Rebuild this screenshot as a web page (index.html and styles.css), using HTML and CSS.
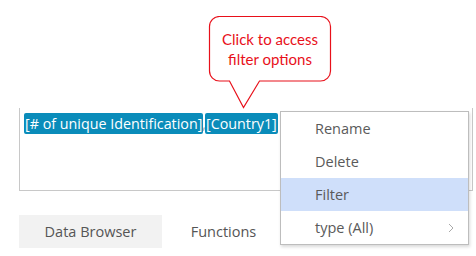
FILE: index.html
```html
<!DOCTYPE html>
<html lang="en">
<head>
  <meta charset="UTF-8">
  <title>Filter options</title>
  <link rel="stylesheet" href="styles.css">
</head>
<body>

  <div class="page">
    <div class="editor">
      <span class="token">[# of unique Identification]</span><span class="sep">,</span><span class="token">[Country1]</span>
    </div>

    <div class="tabs">
      <div class="tab active">Data Browser</div>
      <div class="tab">Functions</div>
    </div>

    <!-- callout pointing at the token -->
    <div class="callout">
      <svg class="callout-shape" width="126" height="96" viewBox="0 0 126 96">
        <path d="M11.5 0.5 H112.5 A10 10 0 0 1 122.5 10.5 V55 A10 10 0 0 1 112.5 65 H51.5 L35.5 91.5 L21.5 65 H11.5 A10 10 0 0 1 1.5 55 V10.5 A10 10 0 0 1 11.5 0.5 Z" fill="#fff" stroke="#e8101a" stroke-width="1.2"/>
      </svg>
      <div class="callout-text">Click to access<br>filter options</div>
    </div>

    <!-- context menu -->
    <div class="menu">
      <div class="menu-item">Rename</div>
      <div class="menu-item">Delete</div>
      <div class="menu-item selected">Filter</div>
      <div class="menu-item">type (All)
        <svg class="chevron" width="6" height="10" viewBox="0 0 6 10">
          <path d="M1 1 L5 5 L1 9" fill="none" stroke="#aaa" stroke-width="1"/>
        </svg>
      </div>
    </div>
  </div>

</body>
</html>
```

FILE: styles.css
```css
body {
  margin: 0;
  font-family: "Open Sans", sans-serif;
  background-color: #fff;
}
.page {
  position: relative;
  width: 476px;
  height: 256px;
  padding-top: 108px;
  box-sizing: border-box;
}
.editor {
  margin-left: 19px;
  width: 454px;
  height: 83px;
  box-sizing: border-box;
  border: 1px solid #c8c8c8;
  border-top: none;
  padding: 5px 0 0 4px;
  display: flex;
  align-items: flex-start;
}
.token {
  background-color: #0a8cba;
  color: #fff;
  font-size: 14.3px;
  line-height: 21px;
  padding: 0 1px;
  border-radius: 2px;
}
.sep {
  color: #aaa;
  font-size: 14px;
  line-height: 21px;
  margin: 0 -1px;
}
.tabs {
  display: flex;
  margin: 24px 0 0 19px;
}
.tab {
  height: 33px;
  line-height: 33px;
  font-size: 14.5px;
  color: #555;
  text-align: center;
  width: 143px;
}
.tab.active {
  background-color: #f2f2f2;
}
.tab + .tab {
  width: 123px;
}
.callout {
  position: absolute;
  left: 208px;
  top: 16px;
  width: 126px;
  height: 96px;
}
.callout-shape {
  position: absolute;
  left: 0;
  top: 0;
}
.callout-text {
  position: relative;
  width: 124px;
  padding-top: 13px;
  text-align: center;
  color: #e8101a;
  font-family: Lato, sans-serif;
  font-size: 15px;
  line-height: 20px;
}
.menu {
  position: absolute;
  left: 280px;
  top: 111px;
  width: 189px;
  box-sizing: border-box;
  background-color: #fff;
  border: 1px solid #bdbdbd;
  box-shadow: 1px 2px 3px rgba(0, 0, 0, 0.15);
}
.menu-item {
  position: relative;
  height: 33px;
  line-height: 33px;
  padding-left: 34px;
  font-size: 14.5px;
  color: #5a5a5a;
}
.menu-item.selected {
  background-color: #cfdffa;
}
.chevron {
  position: absolute;
  right: 14px;
  top: 12px;
}
```
